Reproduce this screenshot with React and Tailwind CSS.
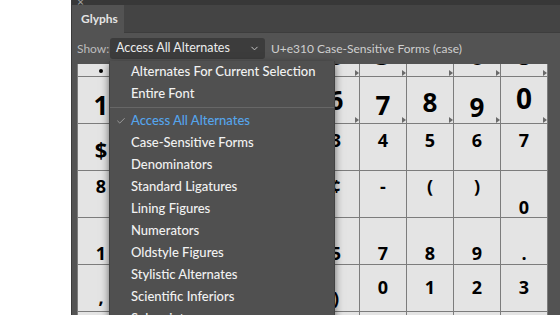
import { Check, ChevronDown } from "lucide-react";

const A = "text-[26px] pt-[12px]";
const B = "text-[18px] pt-[7px]";
const C = "text-[18px] pt-[6px]";
const D = "text-[18px] pt-[26px]";
const E = "text-[18px] pt-[13px]";

const rows = [
  {
    tri: true,
    cells: [["dot", ""], ["2", A], ["3", A], ["4", A], ["5", A], ["6", A], ["3", A], ["", ""], ["6", A], ["8", A]],
  },
  {
    tri: true,
    cells: [
      ["1", "text-[26px] pt-[15px]"],
      ["2", "text-[26px] pt-[15px]"],
      ["3", "text-[26px] pt-[15px]"],
      ["4", "text-[26px] pt-[15px]"],
      ["5", "text-[26px] pt-[15px]"],
      ["6", "text-[26px] pt-[10px]"],
      ["7", "text-[26px] pt-[15px]"],
      ["8", "text-[26px] pt-[12px]"],
      ["9", "text-[26px] pt-[17px]"],
      ["0", "text-[28px] pt-[7px]"],
    ],
  },
  {
    cells: [["$", "text-[22px] pt-[14px]"], ["4", B], ["5", B], ["6", B], ["2", B], ["3", B], ["4", B], ["5", B], ["6", B], ["7", B]],
  },
  {
    cells: [["8", C], ["9", C], ["0", C], ["%", C], ["#", C], ["¢", C], ["-", C], ["(", C], [")", C], ["0", "text-[18px] pt-[27px]"]],
  },
  {
    cells: [["1", D], ["2", D], ["3", D], ["4", D], ["6", D], ["5", D], ["7", D], ["8", D], ["9", D], [".", D]],
  },
  {
    cells: [[",", "text-[18px] pt-[23px]"], ["(", E], ["+", E], ["-", E], ["=", E], [")", "text-[18px] pt-[24px]"], ["0", E], ["1", E], ["2", E], ["3", E]],
  },
  { cells: Array.from({ length: 10 }, () => ["", ""]) },
];

const menu = [
  "Alternates For Current Selection",
  "Entire Font",
  "---",
  "Access All Alternates",
  "Case-Sensitive Forms",
  "Denominators",
  "Standard Ligatures",
  "Lining Figures",
  "Numerators",
  "Oldstyle Figures",
  "Stylistic Alternates",
  "Scientific Inferiors",
  "Subscript",
];

export default function App() {
  return (
    <div className="w-[560px] h-[315px] flex bg-white overflow-hidden font-['Lato',sans-serif]">
      <div className="w-[71px] shrink-0 bg-white" />

      <div className="relative flex-1 flex flex-col bg-[#535353] border-l border-[#3a3a3a]">
        {/* top strip */}
        <div className="h-[5px] bg-[#383838] relative overflow-hidden">
          <span className="absolute left-[5px] -top-[7px] text-[12px] text-[#a8a8a8]">×</span>
        </div>

        {/* tabs */}
        <div className="h-[28px] flex bg-[#444444] border-b border-[#3d3d3d]">
          <div className="w-[52px] h-[28px] bg-[#535353] flex items-center pl-[9px] text-[12px] font-bold text-[#e4e4e4]">
            Glyphs
          </div>
        </div>

        {/* controls */}
        <div className="h-[31px] flex items-center pl-[5px] text-[12px]">
          <span className="w-[33px] text-[#bcbcbc]">Show:</span>
          <div className="w-[155px] h-[21px] rounded-[3px] bg-[#3c3c3c] flex items-center justify-between pl-[6px] pr-[5px] text-[12.5px] text-[#ececec]">
            <span>Access All Alternates</span>
            <ChevronDown className="w-[11px] h-[11px] text-[#d0d0d0]" strokeWidth={2} />
          </div>
          <span className="ml-[6px] text-[#cfcfcf]">U+e310 Case-Sensitive Forms (case)</span>
        </div>

        {/* glyph grid */}
        <div className="flex-1 overflow-hidden pl-[5px]">
          <div className="mt-[-34px] w-[471px] grid grid-cols-[repeat(10,46px)] auto-rows-[46px] gap-px bg-[#7c7c7c] px-px pb-px font-['Open_Sans',sans-serif] font-bold text-black leading-none">
            {rows.map((row, r) =>
              row.cells.map(([g, cls], c) => (
                <div key={`${r}-${c}`} className="relative bg-[#e4e4e4] flex justify-center">
                  {g === "dot" ? (
                    <span className="mt-[39px] w-[4px] h-[4px] rounded-full bg-black" />
                  ) : (
                    <span className={cls}>{g}</span>
                  )}
                  {row.tri && (
                    <span className="absolute right-0 bottom-0 w-0 h-0 border-y-[3px] border-y-transparent border-l-[4px] border-l-[#6a6a6a]" />
                  )}
                </div>
              ))
            )}
          </div>
        </div>

        {/* dropdown menu */}
        <div className="absolute left-[37px] top-[61px] w-[226px] h-[270px] bg-[#505050] border-x border-[#424242] shadow-[0_3px_8px_rgba(0,0,0,0.55)] text-[13px] font-medium text-[#f2f2f2]">
          {menu.map((m, i) =>
            m === "---" ? (
              <div key={i} className="h-[5px] flex items-center">
                <div className="w-full h-px bg-[#676767]" />
              </div>
            ) : (
              <div
                key={i}
                className={`relative h-[22px] flex items-center pl-[21px] ${m === "Access All Alternates" ? "text-[#55a5ec]" : ""}`}
              >
                {m === "Access All Alternates" && (
                  <Check className="absolute left-[6px] top-[6px] w-[10px] h-[10px] text-[#a9a9a9]" strokeWidth={2} />
                )}
                {m}
              </div>
            )
          )}
        </div>
      </div>
    </div>
  );
}
